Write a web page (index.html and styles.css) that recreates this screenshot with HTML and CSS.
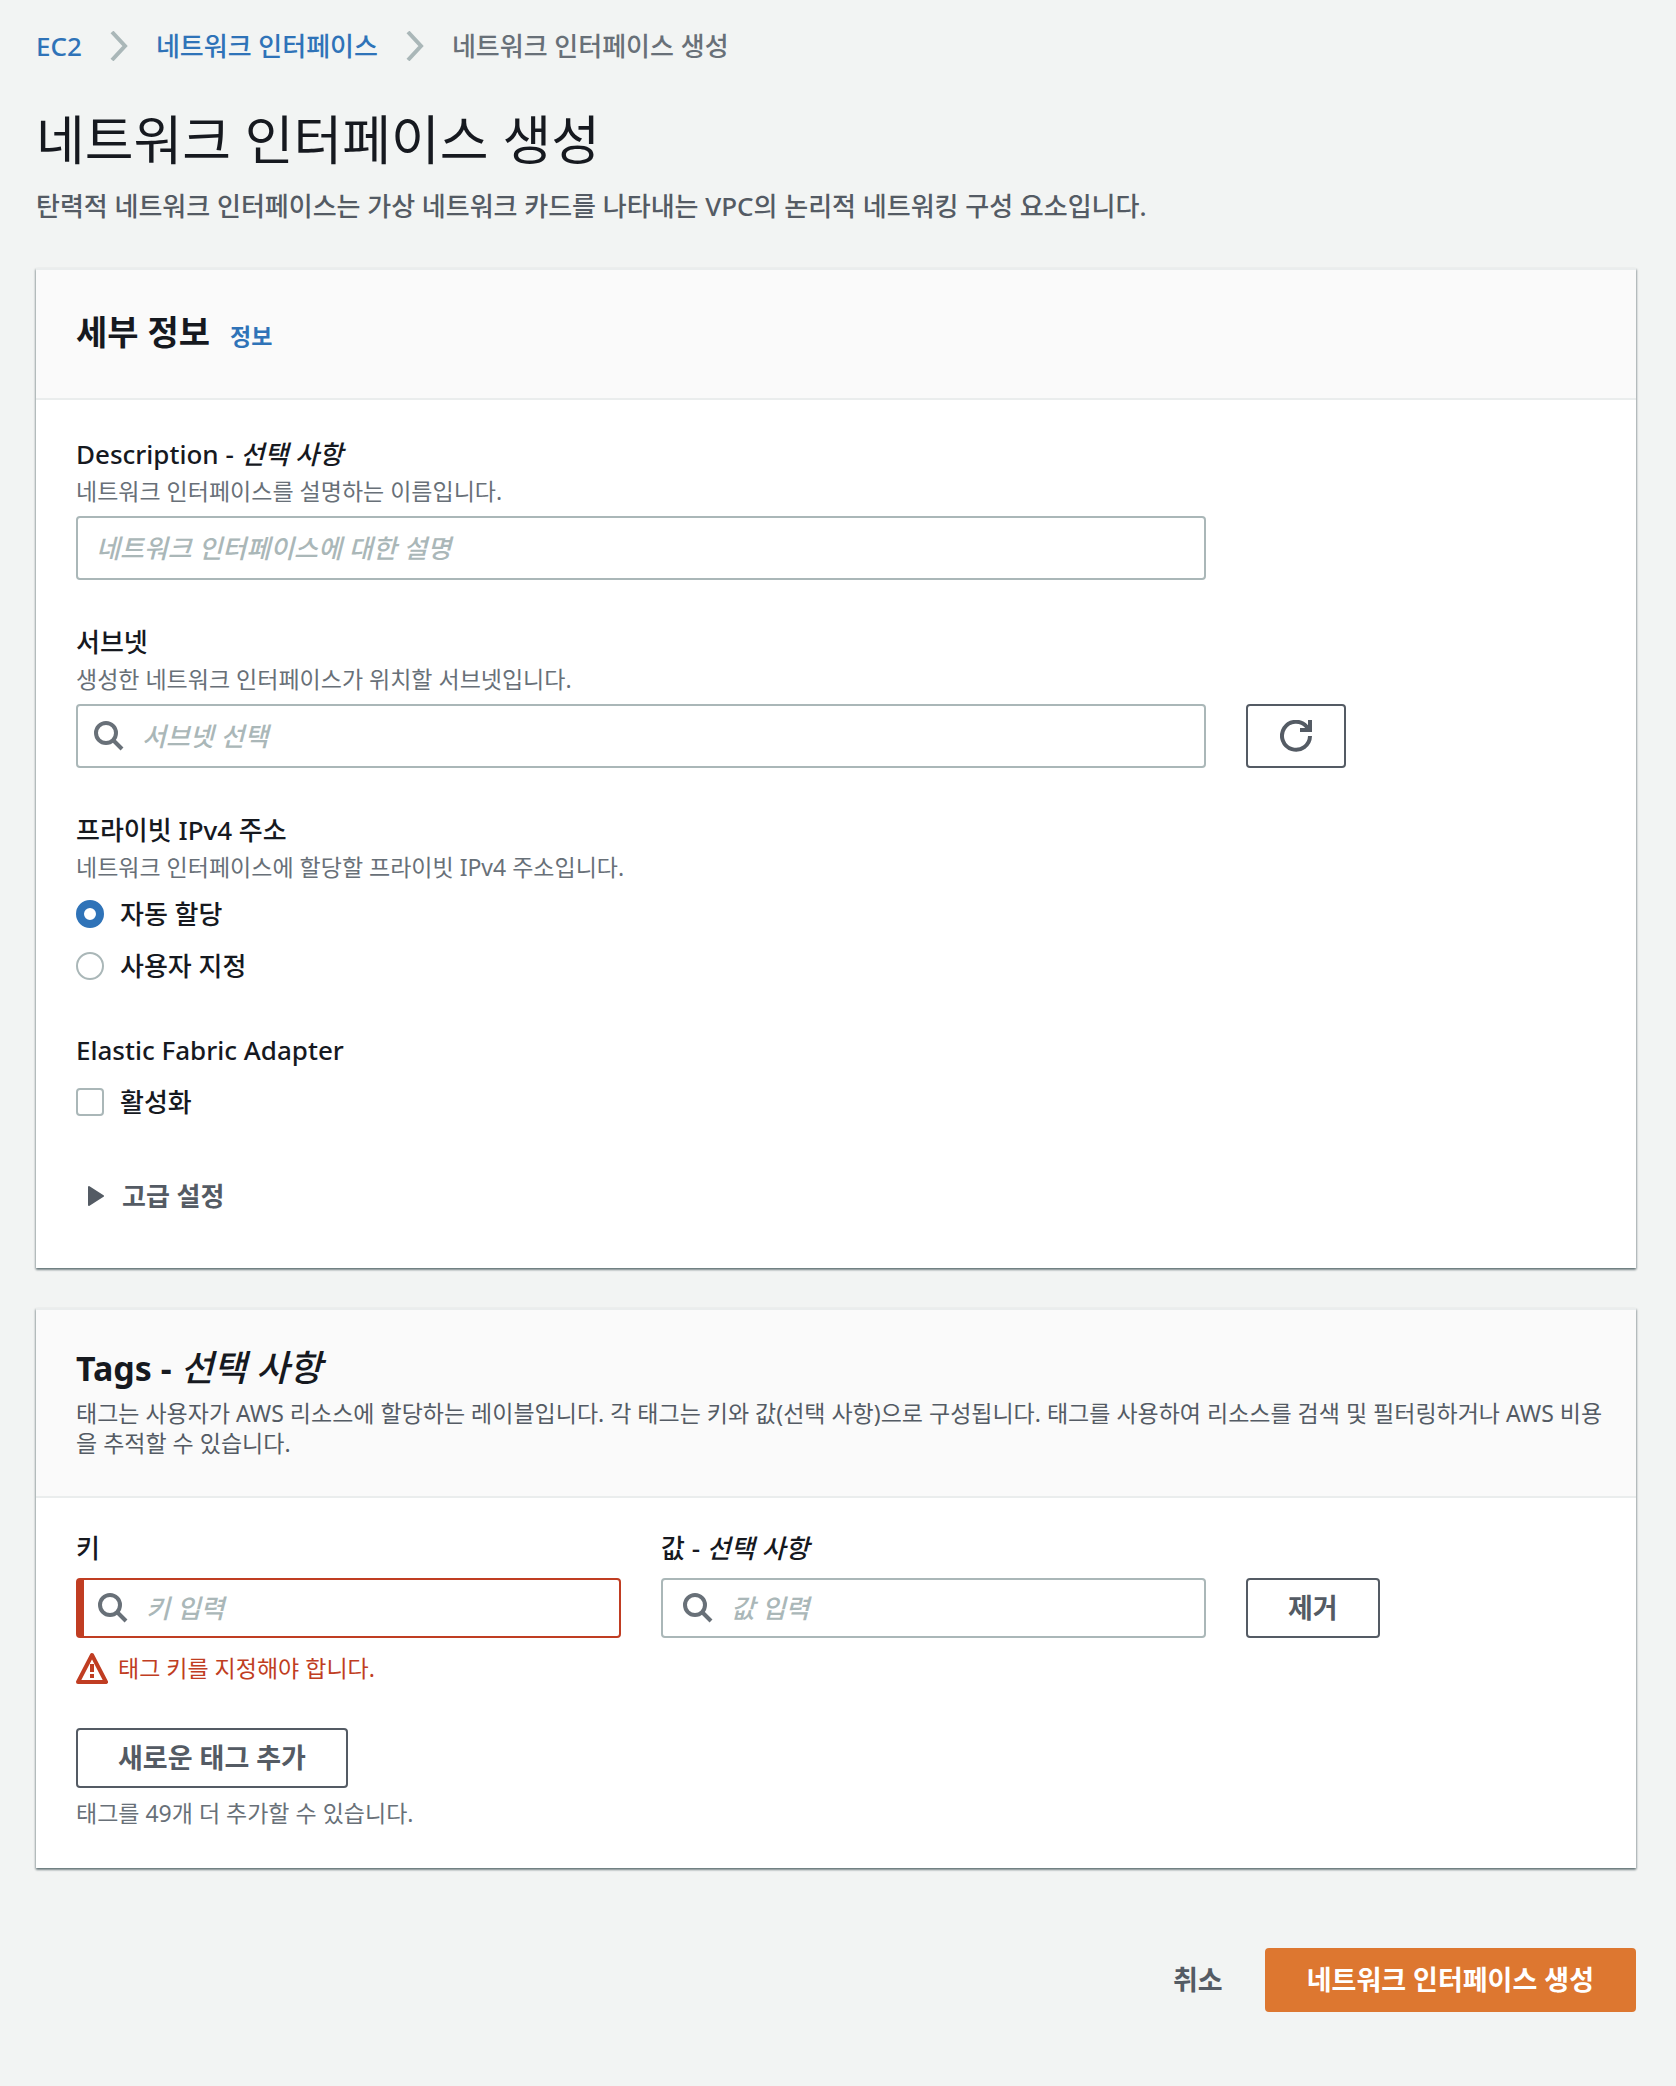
FILE: index.html
```html
<!DOCTYPE html>
<html lang="ko">
<head>
    <meta charset="UTF-8">
    <meta name="viewport" content="width=device-width, initial-scale=1.0">
    <title>네트워크 인터페이스 생성</title>
    <link rel="stylesheet" href="styles.css">
</head>
<body>
    <nav class="breadcrumb">
        <a href="#ec2">EC2</a>
        <svg class="chevron" viewBox="0 0 18 30"><path d="M2 1l13 14L2 29"/></svg>
        <a href="#interfaces">네트워크 인터페이스</a>
        <svg class="chevron" viewBox="0 0 18 30"><path d="M2 1l13 14L2 29"/></svg>
        <span>네트워크 인터페이스 생성</span>
    </nav>
    <header class="page-header">
        <h1>네트워크 인터페이스 생성</h1>
        <p>탄력적 네트워크 인터페이스는 가상 네트워크 카드를 나타내는 VPC의 논리적 네트워킹 구성 요소입니다.</p>
    </header>
    <form>
        <!-- 세부 정보 -->
        <section class="card">
            <div class="card-header">
                <h2>세부 정보</h2>
                <a class="info" href="#info">정보</a>
            </div>
            <div class="card-body">
                <div class="field">
                    <label for="description">Description - <em>선택 사항</em></label>
                    <p class="hint">네트워크 인터페이스를 설명하는 이름입니다.</p>
                    <div class="grid">
                        <input class="input wide" type="text" id="description" placeholder="네트워크 인터페이스에 대한 설명">
                    </div>
                </div>
                <div class="field">
                    <label for="subnet">서브넷</label>
                    <p class="hint">생성한 네트워크 인터페이스가 위치할 서브넷입니다.</p>
                    <div class="grid">
                        <div class="input search wide">
                            <svg class="search-icon" viewBox="0 0 30 30"><circle cx="12" cy="12" r="10"/><path d="M19 19l9 9"/></svg>
                            <input type="text" id="subnet" placeholder="서브넷 선택">
                        </div>
                        <button class="button icon-button" type="button" aria-label="새로 고침">
                            <svg class="refresh-icon" viewBox="0 0 32 32"><path d="M30 16A14 14 0 1 1 26.500 6.500L29 10"/><path d="M30 0v10H20"/></svg>
                        </button>
                    </div>
                </div>
                <fieldset class="field">
                    <legend>프라이빗 IPv4 주소</legend>
                    <p class="hint">네트워크 인터페이스에 할당할 프라이빗 IPv4 주소입니다.</p>
                    <div class="choices">
                        <label class="choice"><input type="radio" name="ipv4" checked>자동 할당</label>
                        <label class="choice"><input type="radio" name="ipv4">사용자 지정</label>
                    </div>
                </fieldset>
                <fieldset class="field efa">
                    <legend>Elastic Fabric Adapter</legend>
                    <label class="choice"><input type="checkbox">활성화</label>
                </fieldset>
                <button class="expander" type="button" aria-expanded="false">
                    <svg class="caret" viewBox="0 0 16 20"><path d="M1 1l14 9-14 9z"/></svg>
                    고급 설정
                </button>
            </div>
        </section>

        <!-- 태그 -->
        <section class="card">
            <div class="card-header described">
                <h2>Tags - <em>선택 사항</em></h2>
                <p>태그는 사용자가 AWS 리소스에 할당하는 레이블입니다. 각 태그는 키와 값(선택 사항)으로 구성됩니다. 태그를 사용하여 리소스를 검색 및 필터링하거나 AWS 비용을 추적할 수 있습니다.</p>
            </div>
            <div class="card-body tags">
                <div class="grid tag-row">
                    <div class="tag-field">
                        <label for="key">키</label>
                        <div class="input search invalid">
                            <svg class="search-icon" viewBox="0 0 30 30"><circle cx="12" cy="12" r="10"/><path d="M19 19l9 9"/></svg>
                            <input type="text" id="key" placeholder="키 입력" aria-invalid="true">
                        </div>
                        <p class="error">
                            <svg class="warning-icon" viewBox="0 0 32 32"><path class="outline" d="M16 3l14 27H2z"/><path d="M16 12v8M16 22v4"/></svg>
                            태그 키를 지정해야 합니다.
                        </p>
                    </div>
                    <div class="tag-field">
                        <label for="value">값 - <em>선택 사항</em></label>
                        <div class="input search">
                            <svg class="search-icon" viewBox="0 0 30 30"><circle cx="12" cy="12" r="10"/><path d="M19 19l9 9"/></svg>
                            <input type="text" id="value" placeholder="값 입력">
                        </div>
                    </div>
                    <button class="button remove" type="button">제거</button>
                </div>
                <button class="button" type="button">새로운 태그 추가</button>
                <p class="hint limit">태그를 49개 더 추가할 수 있습니다.</p>
            </div>
        </section>

        <div class="actions">
            <button class="button link" type="button">취소</button>
            <button class="button primary" type="submit">네트워크 인터페이스 생성</button>
        </div>
    </form>
</body>
</html>
```
FILE: styles.css
```css
* {
    box-sizing: border-box;
}
body {
    margin: 0;
    padding: 24px 40px 72px 36px;
    background-color: #f2f4f3;
    color: #16191f;
    font-family: "Noto Sans", "Noto Sans CJK KR", sans-serif;
    font-size: 26px;
    font-weight: 500;
    line-height: 44px;
}
h1, h2, p, fieldset, legend {
    margin: 0;
    padding: 0;
    border: 0;
}
a {
    color: #2f73b8;
    text-decoration: none;
}
a:hover {
    text-decoration: underline;
}
input, button {
    font: inherit;
    color: inherit;
}
svg {
    display: block;
    flex: none;
    fill: none;
    stroke: currentColor;
}
label, legend {
    display: block;
}

/* breadcrumb, title */
.breadcrumb {
    display: flex;
    align-items: center;
    gap: 28px;
    color: #687078;
}
.chevron {
    width: 18px;
    height: 30px;
    color: #aab7b8;
    stroke-width: 4;
}
.page-header {
    margin: 36px 0 40px;
    color: #545b64;
}
.page-header h1 {
    margin-bottom: 8px;
    color: #16191f;
    font-size: 53px;
    font-weight: normal;
    line-height: 72px;
}

/* card */
.card {
    margin-bottom: 40px;
    border-top: 2px solid #eaeded;
    background-color: #fff;
    box-shadow: 0 2px 2px rgba(0, 28, 36, 0.4), 1px 1px 2px rgba(0, 28, 36, 0.2), -1px 1px 2px rgba(0, 28, 36, 0.2);
}
.card-header {
    display: flex;
    align-items: baseline;
    gap: 20px;
    padding: 40px 40px 44px;
    border-bottom: 2px solid #eaeded;
    background-color: #fafafa;
}
.card-header h2 {
    font-size: 34px;
    line-height: 44px;
}
.card-header em {
    font-size: 36px;
    font-weight: 500;
}
.info {
    font-size: 23px;
    font-weight: bold;
    line-height: 30px;
}
.described {
    display: block;
    padding: 36px 24px 38px 40px;
}
.described p {
    margin-top: 8px;
    color: #545b64;
    font-size: 23px;
    font-weight: normal;
    line-height: 30px;
}
.card-body {
    padding: 32px 40px 40px;
}
.tags {
    padding-top: 28px;
}

/* form */
.grid {
    display: grid;
    grid-template-columns: repeat(8, 1fr);
    gap: 40px;
}
.wide {
    grid-column: span 6;
}
.field {
    margin-bottom: 40px;
}
.hint {
    margin-bottom: 10px;
    color: #687078;
    font-size: 23px;
    font-weight: normal;
    line-height: 30px;
}
.input {
    width: 100%;
    height: 64px;
    padding: 0 18px;
    border: 2px solid #aab7b8;
    border-radius: 4px;
    background-color: #fff;
}
.search {
    display: flex;
    align-items: center;
    gap: 18px;
    padding: 0 16px;
}
.search input {
    flex: 1;
    min-width: 0;
    padding: 0;
    border: 0;
    outline: 0;
    background: none;
}
::placeholder {
    color: #aab7b8;
    font-style: italic;
    opacity: 1;
}
.search-icon {
    width: 30px;
    height: 30px;
    color: #687078;
    stroke-width: 4;
}
.choices {
    display: flex;
    flex-direction: column;
    gap: 8px;
}
.choice {
    display: flex;
    align-items: center;
    gap: 16px;
}
.choice input {
    appearance: none;
    width: 28px;
    height: 28px;
    margin: 0;
    border: 2px solid #aab7b8;
    border-radius: 4px;
    background-color: #fff;
}
.choice input[type="radio"] {
    border-radius: 50%;
}
.choice input[type="radio"]:checked {
    border: 8px solid #2f73b8;
}
.choice input[type="checkbox"]:checked {
    background-color: #2f73b8;
}
.efa legend {
    margin-bottom: 8px;
}
.expander {
    display: flex;
    align-items: center;
    gap: 18px;
    padding: 10px 12px;
    border: 0;
    background: none;
    color: #545b64;
    font-weight: bold;
    cursor: pointer;
}
.caret {
    width: 16px;
    height: 20px;
    fill: currentColor;
    stroke-width: 2;
    stroke-linejoin: round;
}

/* buttons */
.button {
    height: 60px;
    padding: 0 40px;
    border: 2px solid #545b64;
    border-radius: 4px;
    background-color: #fff;
    color: #545b64;
    font-size: 27px;
    font-weight: bold;
    cursor: pointer;
}
.icon-button {
    display: flex;
    align-items: center;
    justify-content: center;
    width: 100px;
    height: 64px;
    padding: 0;
}
.refresh-icon {
    width: 32px;
    height: 32px;
    stroke-width: 4;
}
.link {
    border-color: transparent;
    background: none;
}
.primary {
    height: 64px;
    border-color: #dd7730;
    background-color: #dd7730;
    color: #fff;
}

/* tags */
.tag-row {
    margin-bottom: 44px;
}
.tag-field {
    grid-column: span 3;
}
.tag-field label {
    margin-bottom: 8px;
}
.tag-field .input {
    height: 60px;
    padding: 0 20px;
}
.tag-field .invalid {
    padding-left: 14px;
    border-color: #c03d22;
    border-left-width: 8px;
}
.error {
    display: flex;
    align-items: center;
    gap: 10px;
    margin-top: 14px;
    color: #c03d22;
    font-size: 23px;
    font-weight: normal;
    line-height: 32px;
}
.warning-icon {
    width: 32px;
    height: 32px;
    stroke-width: 4;
}
.outline {
    stroke-linejoin: round;
}
.remove {
    justify-self: start;
    margin-top: 52px;
}
.limit {
    margin: 10px 0 0;
}
.actions {
    display: flex;
    align-items: center;
    justify-content: flex-end;
    padding-top: 40px;
}
```
